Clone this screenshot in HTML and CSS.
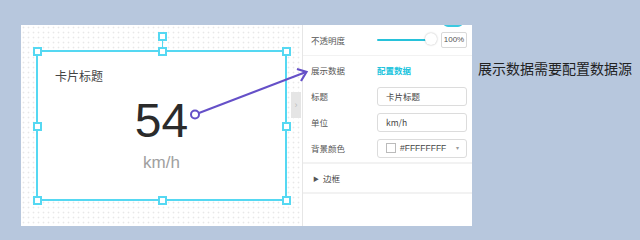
FILE: index.html
```html
<!DOCTYPE html>
<html lang="zh-CN">
<head>
    <meta charset="UTF-8">
    <title>卡片配置</title>
    <link rel="stylesheet" href="styles.css">
</head>
<body>
    <div class="stage">
        <div class="canvas">
            <div class="card">
                <span class="rotate"></span>
                <span class="handle h-tl"></span>
                <span class="handle h-tc"></span>
                <span class="handle h-tr"></span>
                <span class="handle h-ml"></span>
                <span class="handle h-mr"></span>
                <span class="handle h-bl"></span>
                <span class="handle h-bc"></span>
                <span class="handle h-br"></span>
                <div class="card-title">卡片标题</div>
                <div class="card-value">54</div>
                <div class="card-unit">km/h</div>
            </div>
            <div class="panel-toggle">›</div>
        </div>

        <aside class="panel">
            <span class="switch-peek"></span>
            <div class="section">
                <div class="row row-tall">
                    <label>不透明度</label>
                    <div class="slider"><span class="knob"></span></div>
                    <span class="percent">100%</span>
                </div>
            </div>
            <div class="section">
                <div class="row">
                    <label>展示数据</label>
                    <a class="link">配置数据</a>
                </div>
                <div class="row">
                    <label>标题</label>
                    <div class="field">卡片标题</div>
                </div>
                <div class="row">
                    <label>单位</label>
                    <div class="field">km/h</div>
                </div>
                <div class="row">
                    <label>背景颜色</label>
                    <div class="field color-field">
                        <span class="swatch"></span>
                        <span class="hex">#FFFFFFFF</span>
                        <span class="caret">▾</span>
                    </div>
                </div>
            </div>
            <div class="section">
                <div class="row collapse"><span class="tri">▶</span>边框</div>
            </div>
        </aside>
    </div>

    <p class="note">展示数据需要配置数据源</p>

    <svg class="arrow" width="640" height="240" viewBox="0 0 640 240">
        <circle cx="195" cy="114.5" r="4" fill="#fff" stroke="#6550c8" stroke-width="2"/>
        <line x1="199" y1="113" x2="306" y2="72" stroke="#6550c8" stroke-width="2"/>
        <polyline points="297,69 306.5,72 301,81" fill="none" stroke="#6550c8" stroke-width="2.2" stroke-linejoin="miter"/>
    </svg>
</body>
</html>
```

FILE: styles.css
```css
body { margin: 0; padding: 25px 0 0 21px; background: #b7c7dd; display: flex; align-items: flex-start; font-family: "Liberation Sans", "Noto Sans CJK SC", sans-serif; }
.stage { display: flex; background: #fff; height: 201px; }

.canvas { position: relative; width: 281px; flex: none; background-color: #fff; background-image: radial-gradient(#e8e8e8 0.8px, transparent 1.1px); background-size: 5px 5px; }
.card { position: relative; box-sizing: border-box; margin: 25px 0 0 15px; width: 251px; height: 151px; border: 2px solid #55d8f2; background: #fff; padding-top: 16px; text-align: center; }
.card-title { text-align: left; padding-left: 17px; font-family: "Noto Sans CJK SC", sans-serif; font-size: 12px; line-height: 16px; color: #444; }
.card-value { margin-top: 13px; font-size: 48px; line-height: 48px; color: #2b2b2b; }
.card-unit { margin-top: 8px; font-size: 17px; line-height: 20px; color: #a0a0a0; }

.handle { position: absolute; width: 9px; height: 9px; box-sizing: border-box; border: 2px solid #55d8f2; background: #fff; }
.h-tl, .h-tc, .h-tr { top: -5.5px; }
.h-ml, .h-mr { top: 69.5px; }
.h-bl, .h-bc, .h-br { bottom: -5.5px; }
.h-tl, .h-ml, .h-bl { left: -5.5px; }
.h-tc, .h-bc { left: 119.5px; }
.h-tr, .h-mr, .h-br { right: -5.5px; }
.rotate { position: absolute; top: -20px; left: 119.5px; width: 9px; height: 9px; box-sizing: border-box; border: 2px solid #55d8f2; background: #fff; }
.rotate::after { content: ""; position: absolute; left: 2.5px; top: 7px; width: 1px; height: 8px; background: #55d8f2; }

.panel-toggle { position: absolute; top: 67px; right: 1px; width: 10px; height: 26px; background: #e5e5e5; color: #bbb; font-size: 9px; line-height: 26px; text-align: center; }

.panel { position: relative; overflow: hidden; width: 169px; border-left: 1px solid #e6e6e6; font-family: "Noto Sans CJK SC", sans-serif; font-size: 8.5px; color: #555; }
.switch-peek { position: absolute; top: -8px; right: 9px; width: 20px; height: 10px; border-radius: 5px; background: #3cc9e0; }
.section { border-bottom: 2px solid #f2f2f2; padding: 1px 5px 1px 8px; }
.section:first-of-type { border-bottom-width: 1px; padding: 0 5px 0 8px; }
.row { display: flex; align-items: center; height: 26px; }
.row-tall { height: 30px; }
.row label { width: 66px; flex: none; }

.slider { position: relative; width: 52px; height: 2px; background: #27c2da; border-radius: 1px; }
.knob { position: absolute; right: -8px; top: -6px; width: 12px; height: 12px; border-radius: 50%; background: #fff; box-shadow: 0 0 2px rgba(0,0,0,0.3); }
.percent { margin-left: auto; box-sizing: border-box; width: 26px; height: 16px; border: 1px solid #d9d9d9; border-radius: 2px; font-family: "Liberation Sans", sans-serif; font-size: 8px; line-height: 14px; text-align: center; color: #555; }

.link { color: #21c4dd; font-weight: bold; }
.field { box-sizing: border-box; width: 90px; height: 19px; border: 1px solid #dcdcdc; border-radius: 3px; padding-left: 8px; line-height: 17px; color: #444; }
.color-field { display: flex; align-items: center; font-family: "Liberation Sans", sans-serif; }
.swatch { width: 10px; height: 10px; box-sizing: border-box; border: 1px solid #bbb; margin-right: 4px; }
.caret { margin-left: auto; margin-right: 7px; color: #999; font-size: 6px; }
.collapse { color: #444; }
.tri { font-size: 6px; margin: 0 4px 0 2px; color: #555; }

.note { margin: 33px 0 0 6px; font-family: "Noto Sans CJK SC", sans-serif; font-size: 14px; line-height: 20px; color: #222; }
.arrow { position: absolute; top: 0; left: 0; pointer-events: none; }
```
